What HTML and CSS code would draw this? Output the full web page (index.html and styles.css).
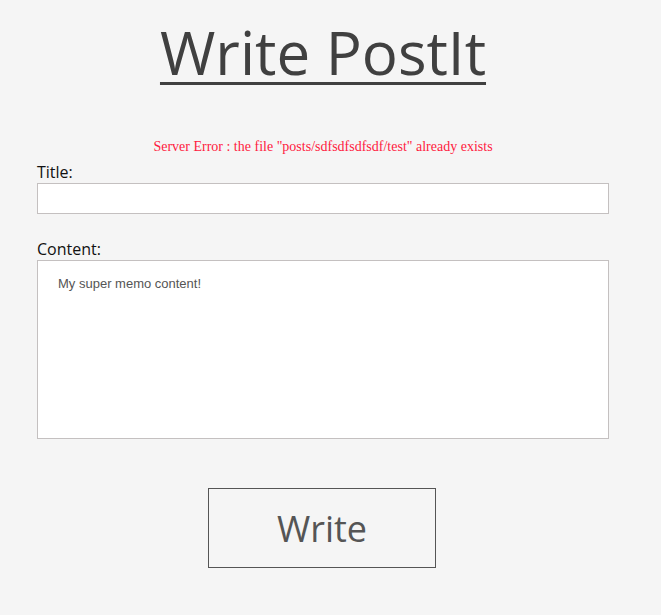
FILE: index.html
```html
<!DOCTYPE html>
<html>
<head>
<meta charset="utf-8">
<link rel="stylesheet" href="styles.css">
</head>
<body>
<div class="page">
  <h1 class="title">Write PostIt</h1>
  <p class="error">Server Error : the file "posts/sdfsdfsdfsdf/test" already exists</p>
  <form class="form">
    <label class="label" for="t">Title:</label>
    <input class="input" id="t" type="text">
    <label class="label label-content" for="c">Content:</label>
    <textarea class="textarea" id="c">My super memo content!</textarea>
    <div class="actions">
      <button class="button" type="button">Write</button>
    </div>
  </form>
</div>
</body>
</html>
```

FILE: styles.css
```css
html, body {
  margin: 0;
  padding: 0;
  background: #f5f5f5;
}
body {
  font-family: "Open Sans", sans-serif;
}
.page {
  width: 572px;
  padding: 0 0 0 37px;
}
.title {
  margin: 12px 0 0;
  text-align: center;
  font-weight: 400;
  font-size: 60px;
  line-height: 80px;
  color: #404040;
  text-decoration: underline;
  text-decoration-thickness: 3px;
  text-underline-offset: 7px;
}
.error {
  margin: 47px 0 0;
  text-align: center;
  font-family: "Liberation Serif", serif;
  font-size: 14px;
  line-height: 16px;
  color: #ff1a40;
}
.form {
  display: flex;
  flex-direction: column;
}
.label {
  font-size: 16px;
  line-height: 22px;
  color: #111;
  margin-top: 6px;
}
.label-content {
  margin-top: 24px;
}
.input {
  box-sizing: border-box;
  width: 572px;
  height: 31px;
  border: 1px solid #c4c0c0;
  background: #fff;
  margin: 0;
  padding: 0 8px;
}
.textarea {
  box-sizing: border-box;
  width: 572px;
  height: 179px;
  border: 1px solid #c4c0c0;
  background: #fff;
  margin: 0;
  padding: 15px 20px;
  font-family: "Liberation Sans", sans-serif;
  font-size: 13px;
  color: #555;
  resize: none;
}
.actions {
  display: flex;
  justify-content: center;
  padding-right: 2px;
  margin-top: 49px;
}
.button {
  box-sizing: border-box;
  width: 228px;
  height: 80px;
  border: 1px solid #555;
  background: #f5f5f5;
  font-family: "Open Sans", sans-serif;
  font-size: 36px;
  color: #555;
  padding: 0;
}
```
